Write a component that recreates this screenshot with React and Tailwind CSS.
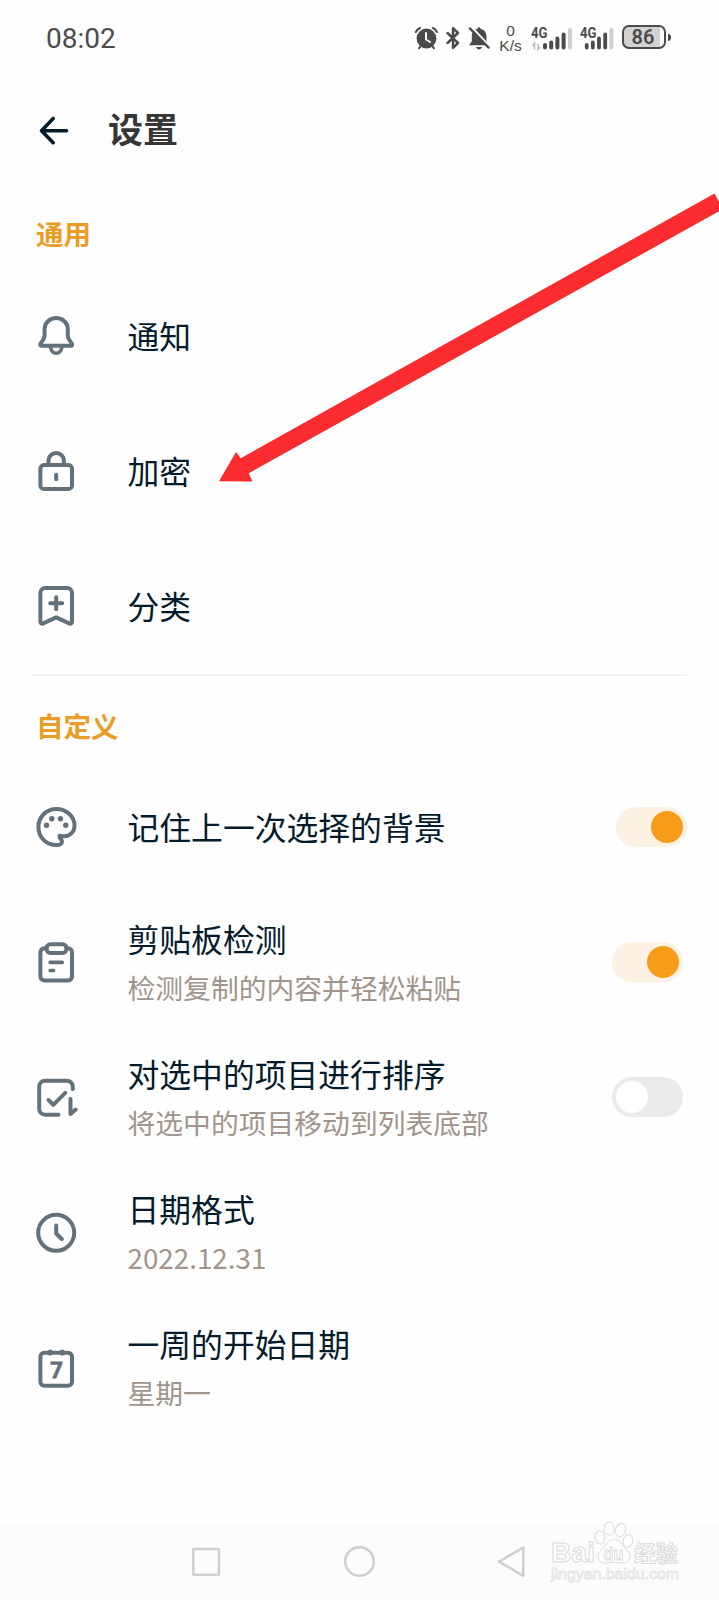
import React from "react";

function LineIcon({ children }) {
  return (
    <svg
      className="h-12 w-12 shrink-0"
      viewBox="0 0 48 48"
      fill="none"
      stroke="#63717a"
      strokeWidth="4"
      strokeLinecap="round"
      strokeLinejoin="round"
    >
      {children}
    </svg>
  );
}

const BellIcon = () => (
  <LineIcon>
    <path d="M24.2 6C17.7 6 12.6 10.800 12.600 17v7c0 3.600-4.300 6.400-4.300 8.400 0 .9.6 1.300 1.400 1.300h29c.8 0 1.400-.4 1.400-1.300 0-2-4.300-4.800-4.300-8.400v-7C35.800 10.800 30.700 6 24.200 6z" />
    <path d="M18.4 35c.7 3.700 2.800 6.200 5.800 6.200s5.100-2.500 5.800-6.200" strokeWidth="3.600" />
  </LineIcon>
);

const LockIcon = () => (
  <LineIcon>
    <rect x="8.4" y="18" width="31.6" height="24" rx="3.6" />
    <path d="M16.5 17v-3.3a7.7 7.7 0 0 1 15.4 0V17" />
    <path d="M24.2 27.7v4.6" />
  </LineIcon>
);

const BookmarkIcon = () => (
  <LineIcon>
    <path d="M8.4 39.8V11a5 5 0 0 1 5-5H35a5 5 0 0 1 5 5v28.8c0 1.7-1.5 2.3-2.8 1.6L24.2 35.4 11.2 41.4c-1.3.7-2.8.1-2.8-1.6z" />
    <path d="M18.2 21.3h12M24.2 15.3v12" />
  </LineIcon>
);

const PaletteIcon = () => (
  <LineIcon>
    <path d="M42.500 22.600C42.500 13.200 34.200 6 24.300 6 14.200 6 6.400 14 6.400 24c0 10.200 7.600 18 18.400 18 3 0 5.200-1.400 5.200-3.600 0-2.300-3.400-2.600-2.400-5.700 6.800 2 14.900-1.200 14.900-10.100z" strokeWidth="4" />
    <g fill="#63717a" stroke="none">
      <circle cx="14.500" cy="22.300" r="2.700" />
      <circle cx="19.800" cy="15.700" r="2.700" />
      <circle cx="28.500" cy="15.700" r="2.700" />
      <circle cx="33.800" cy="22.300" r="2.700" />
    </g>
  </LineIcon>
);

const ClipboardIcon = () => (
  <LineIcon>
    <path d="M14.500 10.300h-2.100a4 4 0 0 0-4 4v24.200a4 4 0 0 0 4 4H36a4 4 0 0 0 4-4V14.300a4 4 0 0 0-4-4h-1.500" />
    <rect x="14.500" y="6.300" width="20" height="8.600" rx="4" />
    <path d="M18.200 24.300h12M18.200 32.500h3.300" strokeWidth="3.700" />
  </LineIcon>
);

const SortCheckIcon = () => (
  <LineIcon>
    <path d="M26.500 41.700H13.200a6 6 0 0 1-6-6v-22a6 6 0 0 1 6-6h21.600a6 6 0 0 1 6 6V16" />
    <path d="M16.500 27l4.800 4.800L33.300 19.800" />
    <path d="M38.500 26v15l5.200-4.500" />
  </LineIcon>
);

const ClockIcon = () => (
  <LineIcon>
    <circle cx="24.200" cy="24.800" r="18" />
    <path d="M24.200 17.500v8l5.600 5.500" />
  </LineIcon>
);

const CalendarIcon = () => (
  <LineIcon>
    <rect x="8.400" y="9.800" width="31.600" height="33" rx="4" />
    <path d="M18.200 8.800v1.500M30.200 8.800v1.500" strokeWidth="4.800" />
    <text
      x="24.600"
      y="35.300"
      textAnchor="middle"
      fontFamily="Roboto, sans-serif"
      fontWeight="500"
      fontSize="22"
      fill="#63717a"
      strokeWidth="1.200"
    >
      7
    </text>
  </LineIcon>
);

function Switch({ on }) {
  return (
    <div
      className={
        on
          ? "flex h-10 w-[71px] shrink-0 items-center justify-end rounded-full bg-[#fdf1e3] p-1"
          : "flex h-10 w-[71px] shrink-0 items-center rounded-full bg-[#e9eaec] p-1"
      }
    >
      <div className={on ? "size-8 rounded-full bg-[#f69c18]" : "size-8 rounded-full bg-white"} />
    </div>
  );
}

function Row({ icon, title, note, trailing }) {
  return (
    <div className="flex h-[135px] shrink-0 items-center pl-[31.5px]">
      {icon}
      <div className={note ? "flex flex-1 flex-col pt-[2px] pl-12" : "flex flex-1 flex-col pb-[2px] pl-12"}>
        <span className="text-[31.8px] leading-[48px] text-[#031b2b]">{title}</span>
        {note && <span className="text-[27.8px] leading-[50px] text-[#a1958b]">{note}</span>}
      </div>
      {trailing}
    </div>
  );
}

function SectionTitle({ children }) {
  return (
    <h2 className="flex h-[84.5px] shrink-0 items-center pt-[15px] pl-9 text-[27.5px] font-bold text-[#ea9c27]">
      {children}
    </h2>
  );
}

function Signal({ data }) {
  return (
    <svg className="h-7 w-[42px]" viewBox="0 0 42 28">
      <text x="0" y="14" fontFamily="Roboto, sans-serif" fontWeight="700" fontSize="15" textLength="16.500" lengthAdjust="spacingAndGlyphs" fill="#4b4b4b">
        4G
      </text>
      {data ? (
        <g>
          <path d="M3.500 25.500v-6l-2 2.500M7 19.500v6l2-2.500" stroke="#bdbdbd" strokeWidth="1.500" fill="none" />
          <g stroke="#4b4b4b" strokeWidth="4" strokeLinecap="round">
            <path d="M14 21v2.500M20.200 18.500v5M26.400 14.500v9M32.600 10.500v13" />
            <path d="M39 6V23.500" stroke="#cecece" />
          </g>
        </g>
      ) : (
        <g strokeWidth="3.800" strokeLinecap="round">
          <path d="M6.700 21v2.500M12.800 18.500v5M19 14.500v9M25.200 10.500v13" stroke="#4b4b4b" />
          <path d="M31.300 6V23.500" stroke="#cecece" />
        </g>
      )}
    </svg>
  );
}

function StatusBar() {
  return (
    <header className="flex h-[76px] shrink-0 items-center pl-[46px] font-[Roboto,sans-serif] text-[#4b4b4b]">
      <span className="w-[368px] pt-[2px] text-[28px] leading-8">08:02</span>
      <svg className="h-6 w-6" viewBox="0 0 24 24" fill="none" stroke="#4b4b4b" strokeLinecap="round">
        <circle cx="12.500" cy="12.500" r="9.900" fill="#4b4b4b" stroke="none" />
        <path d="M1.800 6A9 9 0 0 1 6 2M19 2a9 9 0 0 1 4 4M5 22.300l2-2.300M20 22.300l-2-2.300" strokeWidth="2" />
        <path d="M12 7v6.500l4 2.500" stroke="#fdfdfd" strokeWidth="2" />
      </svg>
      <svg className="ml-[7px] h-6 w-4" viewBox="0 0 16 24" fill="none" stroke="#4b4b4b" strokeWidth="2.500" strokeLinejoin="round" strokeLinecap="round">
        <path d="M2.500 7l10.500 10L8 21.800V2.200L13 7 2.500 17" />
      </svg>
      <svg className="ml-[7px] h-6 w-[22px]" viewBox="0 0 22 24">
        <path d="M11 1.300c.8 0 1.500.6 1.500 1.500 3.400.8 6 3.300 6 7.500v5l2.500 4H1l2.800-4v-5c0-4.200 2.200-6.700 5.700-7.500 0-.9.700-1.500 1.500-1.500zM8 21h6c-.5 1.600-1.600 2.500-3 2.500S8.500 22.600 8 21z" fill="#4b4b4b" />
        <path d="M3.500 1l18 19" stroke="#fdfdfd" strokeWidth="2" />
        <path d="M2 2.500l18.500 19" stroke="#4b4b4b" strokeWidth="2.500" strokeLinecap="round" />
      </svg>
      <div className="ml-[7px] flex w-[27px] flex-col items-center font-['Liberation_Sans',sans-serif] text-[15.5px] leading-[15px]">
        <span>0</span>
        <span>K/s</span>
      </div>
      <div className="ml-[7px] flex">
        <Signal data />
        <div className="ml-[7px]">
          <Signal />
        </div>
      </div>
      <div className="mb-[2px] flex h-6 w-11 items-center justify-center rounded-[7px] border-2 border-[#4b4b4b] bg-[linear-gradient(90deg,#d2d2d2_90%,#fdfdfd_90%)] pr-[2px] text-[20px] font-semibold leading-5">
        86
      </div>
      <div className="mb-[2px] ml-[2px] h-[7px] w-[2.500px] rounded-r bg-[#4b4b4b]" />
    </header>
  );
}

function Watermark() {
  return (
    <svg
      className="absolute top-[1516px] left-[545px] h-[72px] w-[144px]"
      viewBox="0 0 144 72"
      fill="#fefefe"
      stroke="#dadada"
      strokeWidth="1"
      fontFamily="'Liberation Sans', 'Noto Sans CJK SC', sans-serif"
      fontWeight="700"
    >
      <text x="6" y="46" fontSize="28.500" textLength="44" lengthAdjust="spacingAndGlyphs">Bai</text>
      <ellipse cx="55" cy="21.500" rx="4.800" ry="6.500" transform="rotate(-10 55 21.500)" />
      <ellipse cx="64" cy="12.500" rx="5" ry="6.500" />
      <ellipse cx="75.500" cy="14" rx="5" ry="6.700" transform="rotate(14 75.500 14)" />
      <ellipse cx="83" cy="25" rx="4.800" ry="6.300" transform="rotate(10 83 25)" />
      <path d="M69 23.500c-5 0-7 3.500-9.500 7-3 3.500-6.500 5.500-6.500 10 0 4.500 3.500 6.500 7.500 6.500 3 0 5.500-1 8.500-1s5.500 1 8.500 1c4 0 7.500-2 7.500-6.500s-3.500-6.500-6.500-10C76.500 27 74 23.500 69 23.500z" />
      <text x="58.500" y="43.500" fontSize="18" textLength="20" lengthAdjust="spacingAndGlyphs" strokeWidth="0.900">du</text>
      <text x="89" y="45" fontSize="22">经验</text>
      <text x="6" y="62.500" fontSize="14" fontWeight="400" textLength="128" lengthAdjust="spacingAndGlyphs" stroke="#e4e4e4" strokeWidth="0.800">
        jingyan.baidu.com
      </text>
    </svg>
  );
}

export default function App() {
  return (
    <div className="relative flex h-[1600px] w-[719px] flex-col overflow-hidden bg-[#fefefe] font-['Noto_Sans_CJK_SC',sans-serif]">
      <StatusBar />
      <div className="flex h-[108px] shrink-0 items-center pl-[38px]">
        <svg className="h-8 w-8" viewBox="0 0 32 32" fill="none" stroke="#031b2b" strokeWidth="3.600" strokeLinecap="round" strokeLinejoin="round">
          <path d="M28.500 16.700H4M15.200 4.500L3.500 16.700l11.700 12" />
        </svg>
        <h1 className="pb-[5px] pl-[38px] text-[35px] leading-[50px] font-bold text-[#363636]">设置</h1>
      </div>

      <SectionTitle>通用</SectionTitle>
      <Row icon={<BellIcon />} title="通知" />
      <Row icon={<LockIcon />} title="加密" />
      <Row icon={<BookmarkIcon />} title="分类" />

      <div className="mr-8 ml-8 h-[2px] shrink-0 bg-[#f1f2f3]" />

      <SectionTitle>自定义</SectionTitle>
      <div className="-mt-[0.5px]">
        <Row icon={<PaletteIcon />} title="记住上一次选择的背景" trailing={<div className="pr-8"><Switch on /></div>} />
        <Row icon={<ClipboardIcon />} title="剪贴板检测" note="检测复制的内容并轻松粘贴" trailing={<div className="pr-9"><Switch on /></div>} />
        <Row icon={<SortCheckIcon />} title="对选中的项目进行排序" note="将选中的项目移动到列表底部" trailing={<div className="pr-9"><Switch /></div>} />
        <Row icon={<ClockIcon />} title="日期格式" note="2022.12.31" />
        <Row icon={<CalendarIcon />} title="一周的开始日期" note="星期一" />
      </div>

      <nav className="mt-auto flex h-[76px] shrink-0 items-center bg-[#fcfcfc] pl-[190px]">
        <svg className="h-8 w-8" viewBox="0 0 32 32" fill="none" stroke="#cfcfcf" strokeWidth="2.500">
          <rect x="3.300" y="3" width="25.600" height="25.800" rx="1" />
        </svg>
        <svg className="ml-[121px] h-8 w-8" viewBox="0 0 32 32" fill="none" stroke="#cfcfcf" strokeWidth="2.500">
          <circle cx="16.500" cy="15.500" r="14.300" />
        </svg>
        <svg className="ml-[121px] h-8 w-8" viewBox="0 0 32 32" fill="none" stroke="#cfcfcf" strokeWidth="2.500" strokeLinejoin="round">
          <path d="M27.300 1.500v28.300L3 15.600z" />
        </svg>
      </nav>

      <svg className="absolute top-[180px] left-[210px] h-[310px] w-[509px]" viewBox="210 180 509 310" fill="#fb2c2f">
        <path d="M219 481.300 236 452l4.700 6.300L714.500 193.500l8.500 15.500L248.700 473.300l3.700 8.300z" />
      </svg>
      <Watermark />
    </div>
  );
}
